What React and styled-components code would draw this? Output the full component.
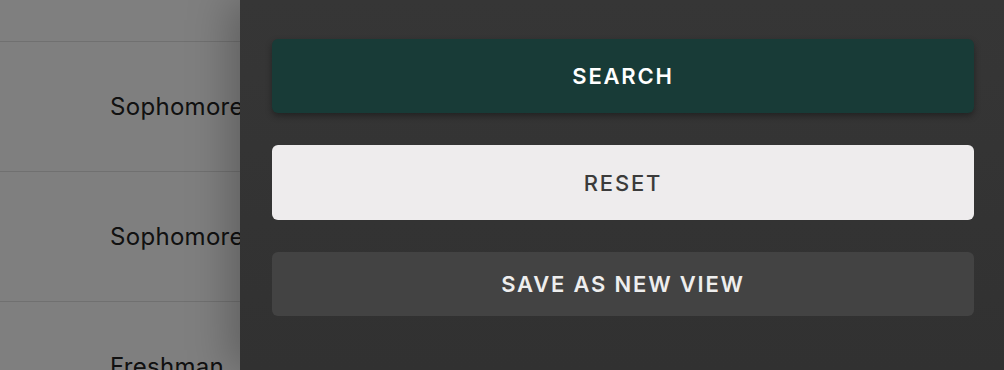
import React from 'react'
import styled, { createGlobalStyle } from 'styled-components';

const GlobalStyle = createGlobalStyle`
  body {
    margin: 0;
    font-family: Inter, "Noto Sans", sans-serif;
  }
`;

const Page = styled.div`
  width: 1004px;
  height: 370px;
  display: flex;
  overflow: hidden;
  position: relative;
`;

const TableArea = styled.div`
  flex: 1;
  background: #ffffff;
  position: relative;
  overflow: hidden;
`;

const Row = styled.div`
  height: ${(p) => p.height}px;
  border-bottom: 1px solid #e0e0e0;
  display: flex;
  align-items: center;
  padding-left: 110px;
  font-size: 24px;
  letter-spacing: 0.3px;
  color: #222;
  white-space: nowrap;
`;

const Overlay = styled.div`
  position: absolute;
  inset: 0;
  background: rgba(0, 0, 0, 0.5);
`;

const Drawer = styled.div`
  width: 764px;
  flex-shrink: 0;
  background: linear-gradient(#363636, #313131);
  box-shadow: -10px 0 40px rgba(0, 0, 0, 0.25);
  padding: 39px 30px 0 32px;
  box-sizing: border-box;
  display: flex;
  flex-direction: column;
  gap: 32px;
  z-index: 1;
`;

const variants = {
  primary: { bg: '#183b37', color: '#ffffff', height: 74, weight: 600, shadow: '0 3px 6px rgba(0,0,0,0.35)' },
  light: { bg: '#eeeced', color: '#3b3b3b', height: 75, weight: 500, shadow: 'none' },
  ghost: { bg: '#434343', color: '#eeeeee', height: 64, weight: 600, shadow: 'none' },
};

const Button = styled.button`
  height: ${(p) => variants[p.variant].height}px;
  border: none;
  border-radius: 6px;
  background: ${(p) => variants[p.variant].bg};
  color: ${(p) => variants[p.variant].color};
  box-shadow: ${(p) => variants[p.variant].shadow};
  font-family: Inter, "Noto Sans", sans-serif;
  font-size: 22px;
  font-weight: ${(p) => variants[p.variant].weight};
  letter-spacing: 1.8px;
  text-transform: uppercase;
  cursor: pointer;
`;

const App = () => {
  return (
    <Page>
      <GlobalStyle />
      <TableArea>
        <Row height={41}></Row>
        <Row height={129}>Sophomore</Row>
        <Row height={129}>Sophomore</Row>
        <Row height={129}>Freshman</Row>
        <Overlay />
      </TableArea>
      <Drawer>
        <Button variant="primary">Search</Button>
        <Button variant="light">Reset</Button>
        <Button variant="ghost">Save as new view</Button>
      </Drawer>
    </Page>
  )
}

export default App
